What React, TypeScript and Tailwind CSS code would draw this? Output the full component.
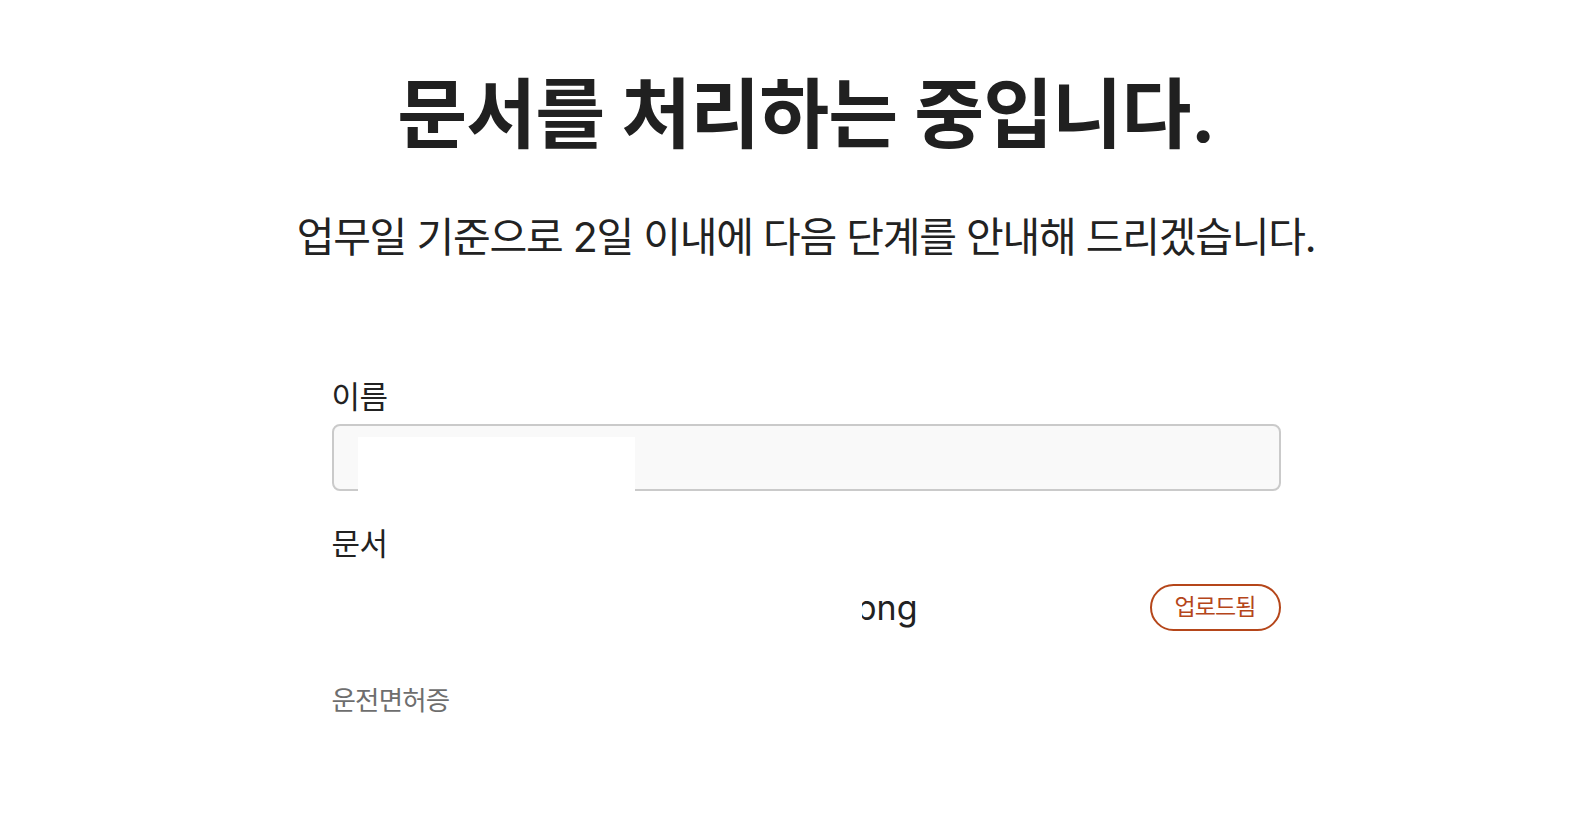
const sans = "font-['Inter','Noto_Sans_CJK_KR',sans-serif]"

function Field({ label, children }: { label: string; children: React.ReactNode }) {
    return (
        <div className="flex flex-col">
            <span className="text-[31px] leading-[40px] tracking-[-0.02em] text-[#222]">{label}</span>
            {children}
        </div>
    )
}

export default function App() {
    return (
        <div className={`min-h-screen bg-white pl-[22px] ${sans}`}>
            <div className="flex flex-col items-center pt-[64px]">
                <h1 className="text-[76px] font-bold leading-[100px] tracking-[-0.012em] text-[#202020]">
                    문서를 처리하는 중입니다.
                </h1>
                <p className="mt-[47px] text-[41px] leading-[52px] tracking-[-0.03em] text-[#222]">
                    업무일 기준으로 2일 이내에 다음 단계를 안내해 드리겠습니다.
                </p>
            </div>

            <div className="mx-auto mt-[114px] flex w-[949px] flex-col">
                <Field label="이름">
                    <div className="mt-[7px] h-[67px] rounded-[8px] border-2 border-[#cacaca] bg-[#f9f9f9]">
                        <div className="ml-[24px] mt-[11px] h-[56px] w-[277px] bg-white" />
                    </div>
                </Field>

                <div className="mt-[33px]">
                    <Field label="문서">
                        <div className="mt-[20px] flex items-center justify-between">
                            <div className="ml-[530px] flex w-[56px] justify-end overflow-hidden whitespace-nowrap text-[34px] leading-[40px] text-[#222]">
                                png
                            </div>
                            <span className="flex h-[47px] w-[131px] items-center justify-center rounded-full border-2 border-[#b5461a] text-[23px] tracking-[-0.04em] text-[#b5461a]">
                                업로드됨
                            </span>
                        </div>
                    </Field>
                </div>

                <span className="mt-[52px] text-[26.5px] leading-[34px] tracking-[-0.03em] text-[#6e6e6e]">운전면허증</span>
            </div>
        </div>
    )
}
